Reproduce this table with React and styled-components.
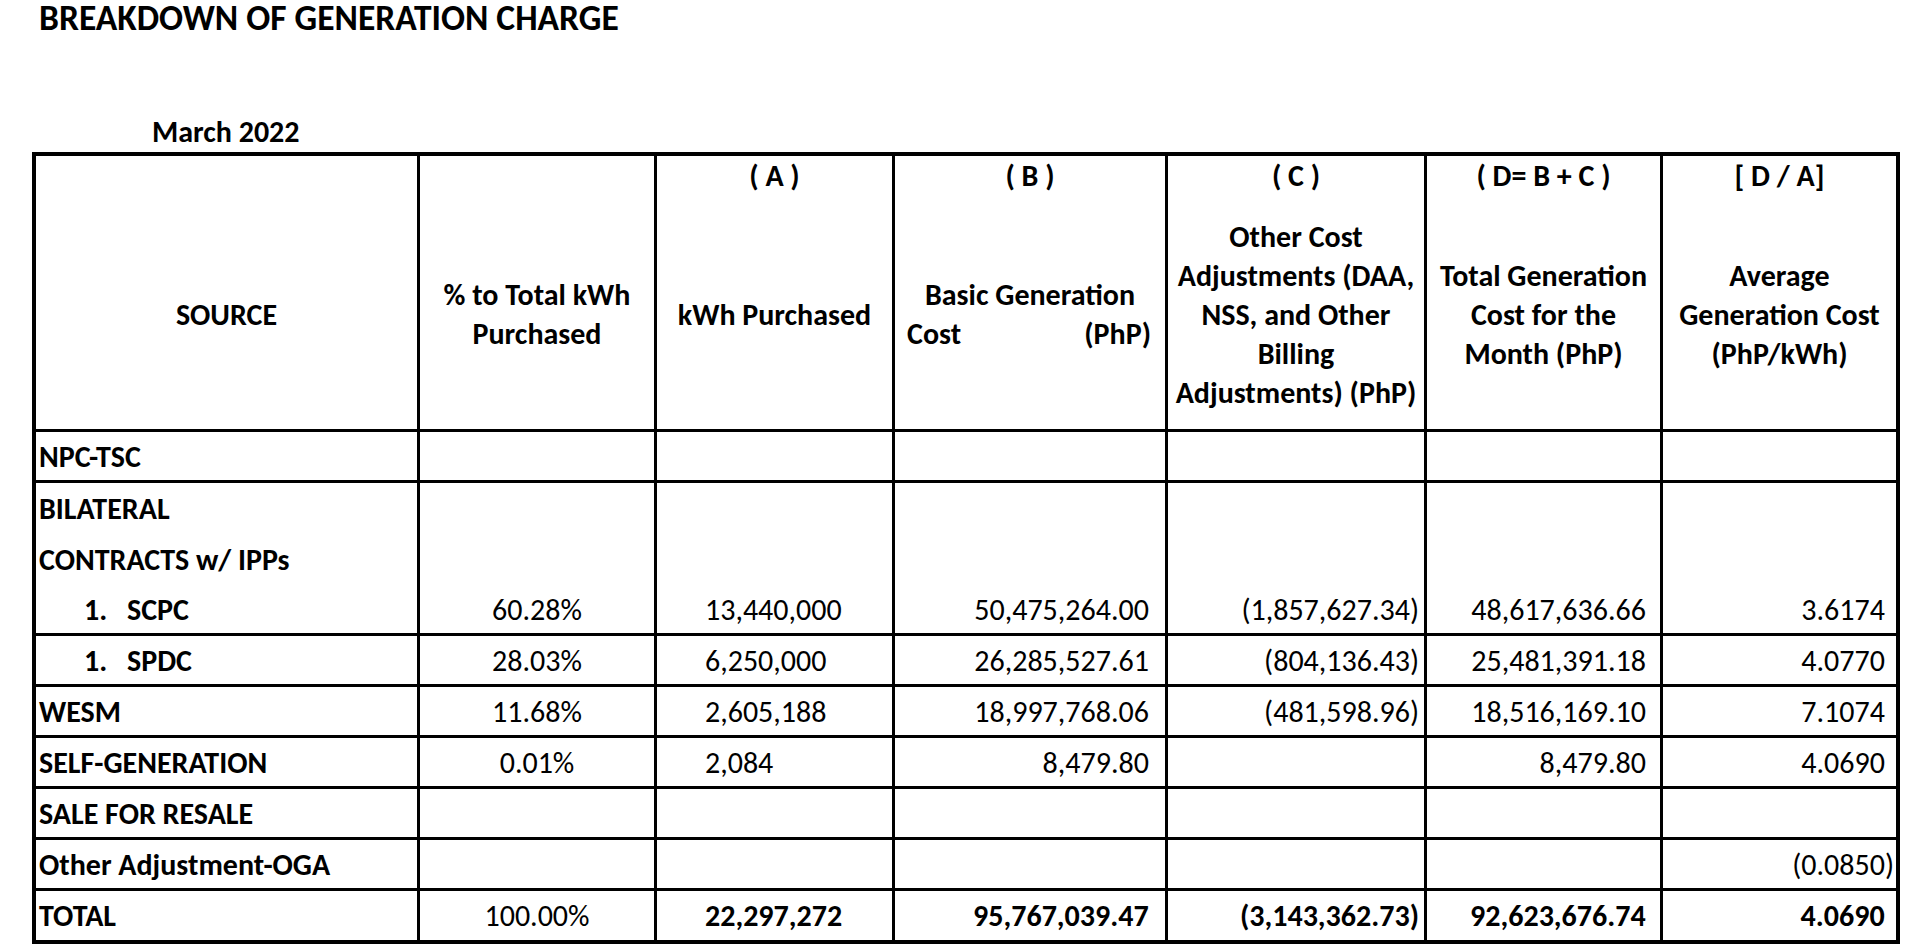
import React from 'react';
import styled, { createGlobalStyle } from 'styled-components';

const Global = createGlobalStyle`
  html, body { margin: 0; padding: 0; background: #fff; }
  body { font-family: Carlito, Lato, "Open Sans", sans-serif; color: #000; }
`;

const COLS = '384px 237px 238px 273px 259px 236px 233px';

const Page = styled.div`
  width: 1924px;
`;

const Title = styled.h1`
  margin: 0;
  padding-left: 39px;
  font-size: 35.5px;
  line-height: 36px;
  font-weight: 700;
`;

const Period = styled.div`
  margin-top: 80px;
  padding-left: 152px;
  font-size: 30px;
  line-height: 31px;
  font-weight: 700;
`;

const Sheet = styled.div`
  margin: 5px 0 0 32px;
  width: 1868px;
  box-sizing: border-box;
  border: 4px solid #000;
  font-size: 30px;
  line-height: 31px;
`;

const Row = styled.div`
  display: grid;
  grid-template-columns: ${COLS};
  height: ${(p) => p.$h}px;
  box-sizing: border-box;
  border-bottom: ${(p) => (p.$open ? 'none' : '3px solid #000')};
`;

const justify = { left: 'flex-start', center: 'center', right: 'flex-end' };

const Cell = styled.div`
  box-sizing: border-box;
  border-right: 3px solid #000;
  display: flex;
  align-items: center;
  justify-content: ${(p) => justify[p.$align || 'left']};
  padding: 0 ${(p) => p.$pr || 0}px 0 ${(p) => p.$pl || 0}px;
  font-weight: ${(p) => (p.$bold ? 700 : 400)};
  white-space: nowrap;
  &:last-child {
    border-right: none;
  }
`;

const HeadCell = styled.div`
  box-sizing: border-box;
  border-right: 3px solid #000;
  display: flex;
  flex-direction: column;
  font-weight: 700;
  line-height: 39px;
  text-align: center;
  white-space: nowrap;
  &:last-child {
    border-right: none;
  }
`;

const HeadTag = styled.div`
  height: 43px;
  line-height: 40px;
`;

const HeadText = styled.div`
  flex: 1;
  display: flex;
  flex-direction: column;
  justify-content: center;
`;

const SplitLine = styled.div`
  display: flex;
  justify-content: space-between;
  padding: 0 14px 0 12px;
`;

const ItemNo = styled.span`
  display: inline-block;
  width: 43px;
`;

const Ghost = styled.span`
  visibility: hidden;
`;

function Acct({ v }) {
  if (!v) return null;
  if (v.startsWith('-')) return <span>({v.slice(1)})</span>;
  return (
    <span>
      {v}
      <Ghost>)</Ghost>
    </span>
  );
}

const headers = [
  { tag: '', lines: ['SOURCE'] },
  { tag: '', lines: ['% to Total kWh', 'Purchased'] },
  { tag: '( A )', lines: ['kWh Purchased'] },
  { tag: '( B )', lines: ['Basic Generation'], split: ['Cost', '(PhP)'] },
  {
    tag: '( C )',
    lines: ['Other Cost', 'Adjustments (DAA,', 'NSS, and Other', 'Billing', 'Adjustments) (PhP)'],
  },
  { tag: '( D= B + C )', lines: ['Total Generation', 'Cost for the', 'Month (PhP)'] },
  { tag: '[ D / A]', lines: ['Average', 'Generation Cost', '(PhP/kWh)'] },
];

const rows = [
  { src: 'NPC-TSC' },
  { src: 'BILATERAL', open: true },
  { src: 'CONTRACTS w/ IPPs', open: true },
  {
    item: '1.',
    src: 'SCPC',
    pct: '60.28%',
    kwh: '13,440,000',
    b: '50,475,264.00',
    c: '-1,857,627.34',
    d: '48,617,636.66',
    avg: '3.6174',
  },
  {
    item: '1.',
    src: 'SPDC',
    pct: '28.03%',
    kwh: '6,250,000',
    b: '26,285,527.61',
    c: '-804,136.43',
    d: '25,481,391.18',
    avg: '4.0770',
  },
  {
    src: 'WESM',
    pct: '11.68%',
    kwh: '2,605,188',
    b: '18,997,768.06',
    c: '-481,598.96',
    d: '18,516,169.10',
    avg: '7.1074',
  },
  {
    src: 'SELF-GENERATION',
    pct: '0.01%',
    kwh: '2,084',
    b: '8,479.80',
    d: '8,479.80',
    avg: '4.0690',
  },
  { src: 'SALE FOR RESALE' },
  { src: 'Other Adjustment-OGA', avg: '-0.0850' },
  {
    src: 'TOTAL',
    pct: '100.00%',
    kwh: '22,297,272',
    b: '95,767,039.47',
    c: '-3,143,362.73',
    d: '92,623,676.74',
    avg: '4.0690',
    total: true,
  },
];

export default function App() {
  return (
    <Page>
      <Global />
      <Title>BREAKDOWN OF GENERATION CHARGE</Title>
      <Period>March 2022</Period>
      <Sheet>
        <Row $h={276}>
          {headers.map((h, i) => (
            <HeadCell key={i}>
              <HeadTag>{h.tag}</HeadTag>
              <HeadText>
                {h.lines.map((l) => (
                  <div key={l}>{l}</div>
                ))}
                {h.split && (
                  <SplitLine>
                    <span>{h.split[0]}</span>
                    <span>{h.split[1]}</span>
                  </SplitLine>
                )}
              </HeadText>
            </HeadCell>
          ))}
        </Row>
        {rows.map((r, i) => (
          <Row key={i} $h={r.total ? 49 : 51} $open={r.open || r.total}>
            <Cell $bold $pl={r.item ? 48 : 3}>
              {r.item && <ItemNo>{r.item}</ItemNo>}
              {r.src}
            </Cell>
            <Cell $align="center">{r.pct}</Cell>
            <Cell $pl={48} $bold={r.total}>
              {r.kwh}
            </Cell>
            <Cell $align="right" $pr={7} $bold={r.total}>
              <Acct v={r.b} />
            </Cell>
            <Cell $align="right" $pr={5} $bold={r.total}>
              <Acct v={r.c} />
            </Cell>
            <Cell $align="right" $pr={5} $bold={r.total}>
              <Acct v={r.d} />
            </Cell>
            <Cell $align="right" $pr={2} $bold={r.total}>
              <Acct v={r.avg} />
            </Cell>
          </Row>
        ))}
      </Sheet>
    </Page>
  );
}
